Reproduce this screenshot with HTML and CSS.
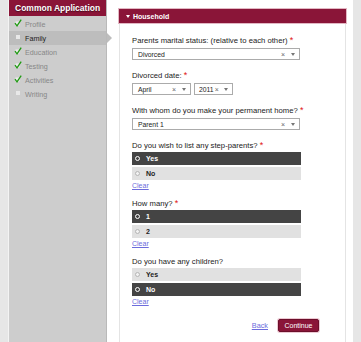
FILE: index.html
```html
<!DOCTYPE html>
<html lang="en">
<head>
  <meta charset="UTF-8" />
  <title>Common Application - Family</title>
  <link rel="stylesheet" href="styles.css">
</head>
<body>
  <div class="app">
    <aside class="sidebar">
      <div class="brand">Common Application</div>
      <ul class="steps">
        <li class="step done"><svg class="mark" viewBox="0 0 8 8"><rect x="1.5" y="2.5" width="4" height="4" fill="#ededed"/><path d="M1 4.2 L3 6.8 L7.2 0.6" fill="none" stroke="#1f9a12" stroke-width="1.3"/></svg>Profile</li>
        <li class="step current"><svg class="mark" viewBox="0 0 8 8"><rect x="2" y="2" width="4" height="4" fill="#e8e8e8"/></svg>Family</li>
        <li class="step done"><svg class="mark" viewBox="0 0 8 8"><rect x="1.5" y="2.5" width="4" height="4" fill="#ededed"/><path d="M1 4.2 L3 6.8 L7.2 0.6" fill="none" stroke="#1f9a12" stroke-width="1.3"/></svg>Education</li>
        <li class="step done"><svg class="mark" viewBox="0 0 8 8"><rect x="1.5" y="2.5" width="4" height="4" fill="#ededed"/><path d="M1 4.2 L3 6.8 L7.2 0.6" fill="none" stroke="#1f9a12" stroke-width="1.3"/></svg>Testing</li>
        <li class="step done"><svg class="mark" viewBox="0 0 8 8"><rect x="1.5" y="2.5" width="4" height="4" fill="#ededed"/><path d="M1 4.2 L3 6.8 L7.2 0.6" fill="none" stroke="#1f9a12" stroke-width="1.3"/></svg>Activities</li>
        <li class="step"><svg class="mark" viewBox="0 0 8 8"><rect x="2" y="2" width="4" height="4" fill="#e8e8e8"/></svg>Writing</li>
      </ul>
    </aside>

    <main class="content">
      <section class="panel">
        <h2 class="panel-head"><span class="caret"></span>Household</h2>
        <div class="panel-body">

          <div class="field">
            <div class="label">Parents marital status: (relative to each other) <span class="req">*</span></div>
            <div class="select wide"><span>Divorced</span><span class="x">×</span><span class="arrow"></span></div>
          </div>

          <div class="field">
            <div class="label">Divorced date: <span class="req">*</span></div>
            <div class="select-row">
              <div class="select month"><span>April</span><span class="x">×</span><span class="arrow"></span></div>
              <div class="select year"><span>2011</span><span class="x">×</span><span class="arrow"></span></div>
            </div>
          </div>

          <div class="field">
            <div class="label">With whom do you make your permanent home? <span class="req">*</span></div>
            <div class="select wide"><span>Parent 1</span><span class="x">×</span><span class="arrow"></span></div>
          </div>

          <div class="field radios">
            <div class="label">Do you wish to list any step-parents? <span class="req">*</span></div>
            <div class="choice on"><span class="dot"></span>Yes</div>
            <div class="choice"><span class="dot"></span>No</div>
            <a href="#" class="clear">Clear</a>
          </div>

          <div class="field radios">
            <div class="label">How many? <span class="req">*</span></div>
            <div class="choice on"><span class="dot"></span>1</div>
            <div class="choice"><span class="dot"></span>2</div>
            <a href="#" class="clear">Clear</a>
          </div>

          <div class="field radios">
            <div class="label">Do you have any children?</div>
            <div class="choice"><span class="dot"></span>Yes</div>
            <div class="choice on"><span class="dot"></span>No</div>
            <a href="#" class="clear">Clear</a>
          </div>

          <div class="actions">
            <a href="#" class="back">Back</a>
            <button class="continue">Continue</button>
          </div>
        </div>
      </section>
    </main>
  </div>
</body>
</html>
```

FILE: styles.css
```css
* { margin: 0; padding: 0; box-sizing: border-box; }

body {
  font-family: "Liberation Sans", Arial, sans-serif;
  background: #e6e6e6;
  overflow: hidden;
}

.app {
  display: flex;
  height: 342px;
  padding-left: 9px;
}

/* left navigation */
.sidebar {
  width: 98px;
  background: #cdcdcd;
  border-right: 1px solid #b9b9b9;
  box-shadow: -1px 0 0 #f3f3f3;
}

.brand {
  height: 16px; line-height: 16px;
  margin-bottom: 1px;
  padding-left: 6px;
  background: #8a1538;
  color: #fff;
  font-size: 8.5px; font-weight: bold;
  text-shadow: 0 1px 1px rgba(0,0,0,0.5);
  white-space: nowrap;
}

.steps { list-style: none; }

.step {
  display: flex; align-items: center;
  position: relative;
  height: 14px;
  padding-left: 5px;
  font-size: 7.2px;
  color: #878787;
}

.step .mark { width: 8px; height: 8px; margin-right: 3px; margin-top: -2px; }

.step.current { background: #bdbdbd; color: #222; }
.step.current::after {
  content: "";
  position: absolute; left: 100%; top: 2px;
  margin-left: 1px;
  border-left: 5px solid #bdbdbd;
  border-top: 5px solid transparent;
  border-bottom: 5px solid transparent;
}

/* main area */
.content {
  display: flex; flex-direction: column;
  width: 246px;
  background: #fff;
  padding: 9px 7px 0 12px;
}

.panel {
  flex: 1;
  border: 1px solid #e4e4e4;
  border-top: none; border-bottom: none;
}

.panel-head {
  display: flex; align-items: center;
  height: 14px;
  margin: 0 -1px;
  padding-left: 7px;
  background: #8a1538;
  box-shadow: 0 0 0 1px #e2b7c3;
  color: #fff;
  font-size: 7px; font-weight: bold;
}

.caret {
  border-top: 3px solid #fff;
  border-left: 2.5px solid transparent;
  border-right: 2.5px solid transparent;
  margin-right: 3px;
}

.panel-body { padding: 13px 0 0 12px; }

.field { margin-bottom: 11px; }
.field.radios { margin-bottom: 8px; }

.label {
  height: 10px; line-height: 10px;
  margin-bottom: 2px;
  font-size: 7.7px;
  color: #222;
  white-space: nowrap;
}
.radios .label { margin-bottom: 1px; }

.req { color: #e01010; font-size: 9px; line-height: 0; }

.select {
  display: flex; align-items: center;
  height: 12px;
  padding: 0 4px 0 5px;
  border: 1px solid #ababab;
  font-size: 6.8px;
  color: #222;
}
.select.wide { width: 168px; }
.select.month { width: 59px; }
.select.year { width: 39px; padding-left: 4px; }
.select-row { display: flex; gap: 3px; }

.select .x { margin-left: auto; color: #666; font-size: 7px; }
.select.year .x { margin-left: 1px; }
.select .arrow {
  margin-left: 6px;
  border-top: 3px solid #777;
  border-left: 2px solid transparent;
  border-right: 2px solid transparent;
}
.select.year .arrow { margin-left: auto; }

.choice {
  display: flex; align-items: center;
  width: 169px; height: 13px;
  margin-bottom: 2px;
  padding-left: 3px;
  background: #e1e1e1;
  color: #222;
  font-size: 7px; font-weight: bold;
}
.choice.on { background: #444; color: #fff; }

.dot {
  width: 5px; height: 5px;
  margin-right: 6px;
  border-radius: 50%;
  border: 1px solid #b5b5b5;
  background: #f2f2f2;
}
.choice.on .dot { border: 1.5px solid #fff; background: #444; }

.clear {
  display: block;
  height: 10px; line-height: 10px;
  margin-top: -1px;
  font-size: 7px;
  color: #6c6cdc;
}

.actions {
  display: flex; align-items: center; justify-content: flex-end;
  gap: 10px;
  margin-top: 12px;
  padding-right: 26px;
}

.back { font-size: 7.3px; color: #6c6cdc; }

.continue {
  width: 41px; height: 13px;
  background: #8a1538;
  border: 1px solid #6c0e2a;
  border-radius: 2px;
  box-shadow: 0 0 0 1px #ecc9d3;
  color: #fff;
  font-family: inherit; font-size: 7px;
}
```
